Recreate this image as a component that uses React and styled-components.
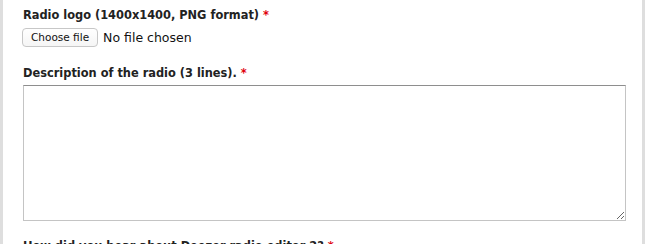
import React from "react";
import styled, { createGlobalStyle } from "styled-components";

const Global = createGlobalStyle`
  html, body { margin: 0; padding: 0; background: #fff; }
  body { font-family: "DejaVu Sans", "Liberation Sans", Arial, sans-serif; color: #222; }
`;

const Panel = styled.div`
  box-sizing: border-box;
  width: 645px;
  height: 244px;
  overflow: hidden;
  border-left: 3px solid #dedede;
  border-right: 3px solid #dedede;
  padding: 7px 17px 0 20px;
`;

const Field = styled.div`
  display: flex;
  flex-direction: column;
  margin-bottom: ${(p) => p.$gap || 0}px;
`;

const Label = styled.label`
  font-weight: bold;
  font-size: 11.4px;
  line-height: 16px;
  color: #222;
  margin-bottom: ${(p) => p.$mb || 4}px;
`;

const Req = styled.span`
  color: #e0000b;
  margin-left: 4px;
`;

const FileRow = styled.div`
  display: flex;
  align-items: center;
  gap: 5px;
  height: 20px;
`;

const FileButton = styled.button`
  box-sizing: border-box;
  height: 19px;
  padding: 0 8px;
  margin-left: -1px;
  border: 1px solid #c7c7c7;
  border-radius: 4px;
  background: linear-gradient(#fff, #f5f5f5);
  font-family: "DejaVu Sans", "Liberation Sans", Arial, sans-serif;
  font-size: 10.5px;
  color: #111;
`;

const FileText = styled.span`
  font-size: 12.5px;
  color: #111;
`;

const TextArea = styled.textarea`
  box-sizing: border-box;
  width: 603px;
  height: 136px;
  border: 1px solid #c4c4c4;
  border-top-color: #8e8e8e;
  margin: 0;
  padding: 2px;
  resize: both;
  font-family: "DejaVu Sans", Arial, sans-serif;
  font-size: 12px;
`;

export default function App() {
  return (
    <>
      <Global />
      <Panel>
        <Field $gap={18}>
          <Label $mb={4}>
            Radio logo (1400x1400, PNG format)<Req>*</Req>
          </Label>
          <FileRow>
            <FileButton type="button">Choose file</FileButton>
            <FileText>No file chosen</FileText>
          </FileRow>
        </Field>
        <Field $gap={17}>
          <Label $mb={4}>
            Description of the radio (3 lines).<Req>*</Req>
          </Label>
          <TextArea />
        </Field>
        <Field>
          <Label>
            How did you hear about Deezer radio editor 2?<Req>*</Req>
          </Label>
        </Field>
      </Panel>
    </>
  );
}
